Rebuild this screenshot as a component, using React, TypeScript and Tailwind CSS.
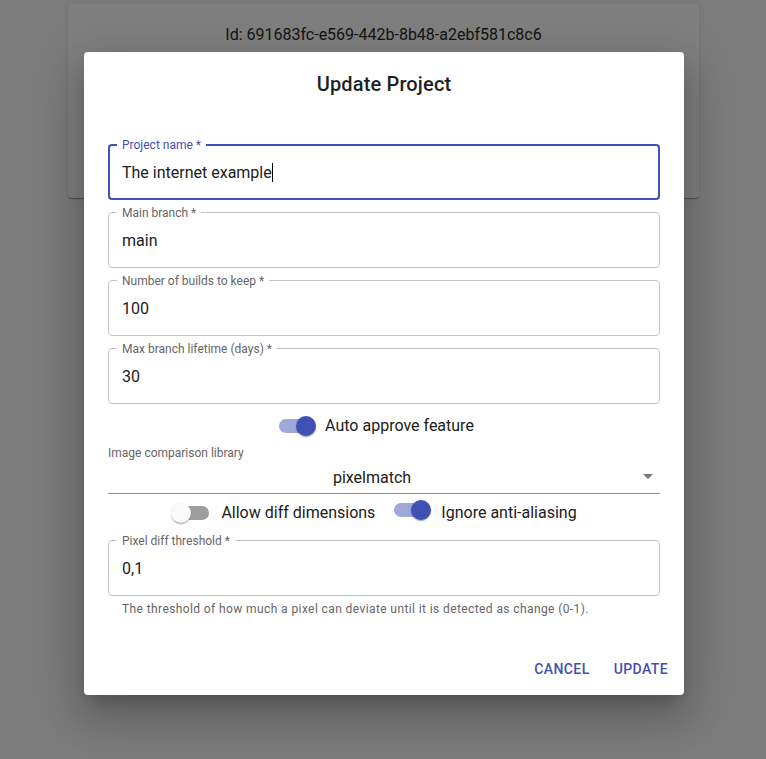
import React from 'react';

const font = { fontFamily: 'Roboto, "Liberation Sans", Arial, sans-serif' };

interface FieldProps {
  label: string;
  value: string;
  focused?: boolean;
}

const OutlinedField: React.FC<FieldProps> = ({ label, value, focused }) => (
  <div
    className={
      focused
        ? 'relative h-[56px] rounded-[4px] border-2 border-[#3f51b5] pl-[12px] flex items-center'
        : 'relative h-[56px] rounded-[4px] border border-[#c4c4c4] pl-[13px] flex items-center'
    }
  >
    <span
      className={
        focused
          ? 'absolute -top-[9px] left-[7px] px-[5px] bg-white text-[12px] leading-[16px] text-[#3f51b5]'
          : 'absolute -top-[8px] left-[8px] px-[5px] bg-white text-[12px] leading-[16px] text-[#666666]'
      }
    >
      {label}
    </span>
    <span className="text-[16px] leading-[19px] text-[#202020] flex items-center">
      {value}
      {focused && <span className="inline-block w-[1px] h-[19px] bg-black" />}
    </span>
  </div>
);

const Toggle: React.FC<{ on: boolean }> = ({ on }) => (
  <span className="relative inline-flex items-center w-[38px] h-[20px]">
    <span className={on ? 'absolute left-[1px] w-[34px] h-[14px] rounded-full bg-[#9fa8da]' : 'absolute left-[4px] w-[34px] h-[14px] rounded-full bg-[#9e9e9e]'} />
    <span
      className={
        on
          ? 'absolute left-[18px] w-[20px] h-[20px] rounded-full bg-[#3f51b5] shadow-[0_2px_1px_-1px_rgba(0,0,0,0.2),0_1px_1px_0_rgba(0,0,0,0.14),0_1px_3px_0_rgba(0,0,0,0.12)]'
          : 'absolute left-0 w-[20px] h-[20px] rounded-full bg-[#fafafa] shadow-[0_2px_1px_-1px_rgba(0,0,0,0.2),0_1px_1px_0_rgba(0,0,0,0.14),0_1px_3px_0_rgba(0,0,0,0.12)]'
      }
    />
  </span>
);

export default function App() {
  return (
    <div className="relative h-[759px] overflow-hidden bg-[#f6f6f6]" style={font}>
      {/* page behind the dialog */}
      <div className="pt-[4px] pl-[68px] pr-[67px]">
        <div className="h-[194px] rounded-[4px] bg-white shadow-[0_2px_1px_-1px_rgba(0,0,0,0.2),0_1px_1px_0_rgba(0,0,0,0.14),0_1px_3px_0_rgba(0,0,0,0.12)] pt-[21px] text-center text-[16px] leading-[20px] text-[#282828]">
          Id: 691683fc-e569-442b-8b48-a2ebf581c8c6
        </div>
      </div>

      {/* overlay */}
      <div className="absolute inset-0 bg-black/50 flex justify-center pt-[52px] pl-[2px]">
        <div className="w-[600px] h-[643px] bg-white rounded-[4px] shadow-[0_11px_15px_-7px_rgba(0,0,0,0.2),0_24px_38px_3px_rgba(0,0,0,0.14),0_9px_46px_8px_rgba(0,0,0,0.12)] flex flex-col">
          <h2 className="pt-[16px] pb-[16px] text-center text-[20px] leading-[32px] font-medium text-[#1f1f1f] tracking-[0.15px]">
            Update Project
          </h2>

          <div className="px-[24px] pt-[28px] flex flex-col">
            <div className="flex flex-col gap-[12px]">
              <OutlinedField label="Project name *" value="The internet example" focused />
              <OutlinedField label="Main branch *" value="main" />
              <OutlinedField label="Number of builds to keep *" value="100" />
              <OutlinedField label="Max branch lifetime (days) *" value="30" />
            </div>

            <div className="flex justify-center items-center gap-[9px] pr-[16px] h-[38px] mt-[3px]">
              <Toggle on />
              <span className="text-[16px] text-[#202020]">Auto approve feature</span>
            </div>

            <div className="text-[12px] leading-[16px] text-[#666666]">Image comparison library</div>
            <div className="relative h-[31px] border-b border-[#8f8f8f] flex items-center justify-center pr-[24px] mt-[2px]">
              <span className="text-[16px] text-[#202020]">pixelmatch</span>
              <svg className="absolute right-[7px] top-[11px]" width="10" height="5" viewBox="0 0 10 5">
                <path d="M0 0 L10 0 L5 5 Z" fill="#757575" />
              </svg>
            </div>

            <div className="flex justify-center items-center h-[38px] pr-[20px]">
              <Toggle on={false} />
              <span className="ml-[12px] text-[16px] text-[#202020]">Allow diff dimensions</span>
              <span className="ml-[18px]">
                <Toggle on />
              </span>
              <span className="ml-[10px] text-[16px] text-[#202020]">Ignore anti-aliasing</span>
            </div>

            <div className="mt-[8px]">
              <OutlinedField label="Pixel diff threshold *" value="0,1" />
            </div>
            <p className="mt-[3px] px-[14px] text-[12px] leading-[20px] tracking-[0.4px] text-[#666666]">
              The threshold of how much a pixel can deviate until it is detected as change (0-1).
            </p>
          </div>

          <div className="mt-auto flex justify-end gap-[8px] p-[8px] pb-[8px]">
            <button className="h-[36px] px-[8px] text-[14px] font-medium tracking-[0.4px] uppercase text-[#3f51b5]">Cancel</button>
            <button className="h-[36px] px-[8px] text-[14px] font-medium tracking-[0.4px] uppercase text-[#3f51b5]">Update</button>
          </div>
        </div>
      </div>
    </div>
  );
}
